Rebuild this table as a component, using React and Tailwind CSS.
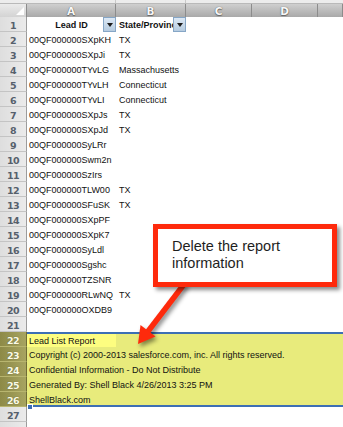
import React from 'react';

const rows = [
    ['00QF000000SXpKH', 'TX'],
    ['00QF000000SXpJi', 'TX'],
    ['00QF000000TYvLG', 'Massachusetts'],
    ['00QF000000TYvLH', 'Connecticut'],
    ['00QF000000TYvLI', 'Connecticut'],
    ['00QF000000SXpJs', 'TX'],
    ['00QF000000SXpJd', 'TX'],
    ['00QF000000SyLRr', ''],
    ['00QF000000Swm2n', ''],
    ['00QF000000SzIrs', ''],
    ['00QF000000TLW00', 'TX'],
    ['00QF000000SFuSK', 'TX'],
    ['00QF000000SXpPF', ''],
    ['00QF000000SXpK7', ''],
    ['00QF000000SyLdl', ''],
    ['00QF000000Sgshc', ''],
    ['00QF000000TZSNR', ''],
    ['00QF000000RLwNQ', 'TX'],
    ['00QF000000OXDB9', ''],
];

const report = [
    'Lead List Report',
    'Copyright (c) 2000-2013 salesforce.com, inc. All rights reserved.',
    'Confidential Information - Do Not Distribute',
    'Generated By: Shell Black 4/26/2013 3:25 PM',
    'ShellBlack.com',
];

const RowNum = ({n, selected}) => (
    <div
        className={`w-[27px] h-[15px] shrink-0 text-center font-['DejaVu_Sans'] font-bold text-[9.5px] leading-[17px] tracking-[-0.5px] border-r border-b ${
            selected
                ? 'bg-gradient-to-r from-[#8d8a47] to-[#a7a461] text-[#fbfbe6] border-r-[#6f6c35] border-b-[#b8b56f] [text-shadow:0_0_1px_#55532a]'
                : 'bg-gradient-to-r from-[#dedede] to-[#ebebeb] text-[#56606c] border-r-[#9c9c9c] border-b-[#c4c4c4]'
        }`}
    >
        {n}
    </div>
);

const FilterButton = () => (
    <div className="w-[13px] h-[15px] shrink-0 bg-gradient-to-b from-[#dce8f4] to-[#b5cbe0] border border-[#86a6c6] flex items-center justify-center">
        <div className="w-0 h-0 border-l-[3.5px] border-r-[3.5px] border-t-[4px] border-l-transparent border-r-transparent border-t-[#1a1a1a]"/>
    </div>
);

const ColHead = ({label, w}) => (
    <div className={`${w} h-[13px] shrink-0 text-center font-['DejaVu_Sans'] font-bold text-[10.5px] leading-[15px] text-[#f7f7f7] [text-shadow:0_0_1px_#4a4a4a,0_1px_1px_#666] bg-gradient-to-b from-[#cfcfcf] to-[#a9a9a9] border-r border-[#8c8c8c]`}>
        {label}
    </div>
);

export default function App() {
    return (
        <div className="relative w-[343px] h-[427px] overflow-hidden bg-white font-['Liberation_Sans',sans-serif] text-[9px] text-[#111]">
            {/* strip above the column headers */}
            <div className="h-[4px] bg-[#ececec] border-b border-[#b9b9b9] flex">
                <div className="w-[116px] border-r border-[#c9c9c9]"/>
                <div className="w-[70px] border-r border-[#c9c9c9]"/>
            </div>

            {/* column headers */}
            <div className="flex">
                <div className="w-[27px] h-[13px] shrink-0 relative bg-gradient-to-b from-[#ebebeb] to-[#d3d3d3] border-r border-[#8c8c8c]">
                    <div className="absolute right-[2px] bottom-[2px] w-[8px] h-[8px] bg-white [clip-path:polygon(100%_0,100%_100%,0_100%)]"/>
                </div>
                <ColHead label="A" w="w-[89px]"/>
                <ColHead label="B" w="w-[70px]"/>
                <ColHead label="C" w="w-[66px]"/>
                <ColHead label="D" w="w-[66px]"/>
                <ColHead label="" w="flex-1"/>
            </div>

            {/* row 1: headers with filters */}
            <div className="flex h-[15px]">
                <RowNum n={1}/>
                <div className="w-[89px] shrink-0 flex">
                    <div className="flex-1 text-center font-bold leading-[17px] pl-[13px]">Lead ID</div>
                    <FilterButton/>
                </div>
                <div className="w-[70px] shrink-0 flex">
                    <div className="flex-1 overflow-hidden whitespace-nowrap font-bold leading-[17px] pl-[3px]">State/Province</div>
                    <FilterButton/>
                </div>
            </div>

            {rows.map(([id, state], i) => (
                <div key={id} className="flex h-[15px]">
                    <RowNum n={i + 2}/>
                    <div className="w-[89px] shrink-0 pl-[2px] leading-[17px] whitespace-nowrap">{id}</div>
                    <div className="w-[70px] shrink-0 pl-[3px] leading-[17px] whitespace-nowrap">{state}</div>
                </div>
            ))}

            <div className="flex h-[15px]">
                <RowNum n={21}/>
            </div>

            {/* selected report block */}
            <div className="flex">
                <div className="flex flex-col">
                    {report.map((_, i) => (
                        <RowNum key={i} n={22 + i} selected/>
                    ))}
                </div>
                <div className="relative flex-1 bg-[#e8eb7c] shadow-[inset_0_2px_0_#3d6fb4,inset_0_-2px_0_#3d6fb4]">
                    {report.map((line, i) => (
                        <div key={line} className="h-[15px] flex">
                            <div className={`w-[89px] shrink-0 pl-[2px] whitespace-nowrap ${i === 0 ? 'bg-[#fdfd80] mt-[2px] h-[13px] leading-[15px]' : 'leading-[17px]'}`}>
                                {line}
                            </div>
                        </div>
                    ))}
                    <div className="absolute left-[0px] bottom-[-3px] w-[6px] h-[6px] bg-[#3d6fb4] border border-white"/>
                </div>
            </div>

            <div className="flex h-[15px]">
                <RowNum n={27}/>
            </div>
            <div className="flex h-[15px]">
                <RowNum n={28}/>
            </div>

            {/* callout arrow */}
            <svg className="absolute left-0 top-0 w-[343px] h-[427px] pointer-events-none drop-shadow-[2px_3px_2px_rgba(0,0,0,0.45)]" viewBox="0 0 343 427">
                <line x1="185" y1="283" x2="146" y2="334" stroke="#fe2a0c" strokeWidth="5.5"/>
                <polygon points="138,344 140.5,325 155.5,336.5" fill="#fe2a0c"/>
            </svg>

            {/* callout box */}
            <div className="absolute left-[153px] top-[224px] w-[184px] h-[63px] bg-white border-[5px] border-[#fe2a0c] shadow-[3px_3px_4px_rgba(0,0,0,0.45)] pl-[14px] pt-[9px] font-['Liberation_Sans',Arial,sans-serif] text-[14.5px] leading-[17px] text-[#1e1e1e]">
                Delete the report
                <br/>
                information
            </div>
        </div>
    );
}
